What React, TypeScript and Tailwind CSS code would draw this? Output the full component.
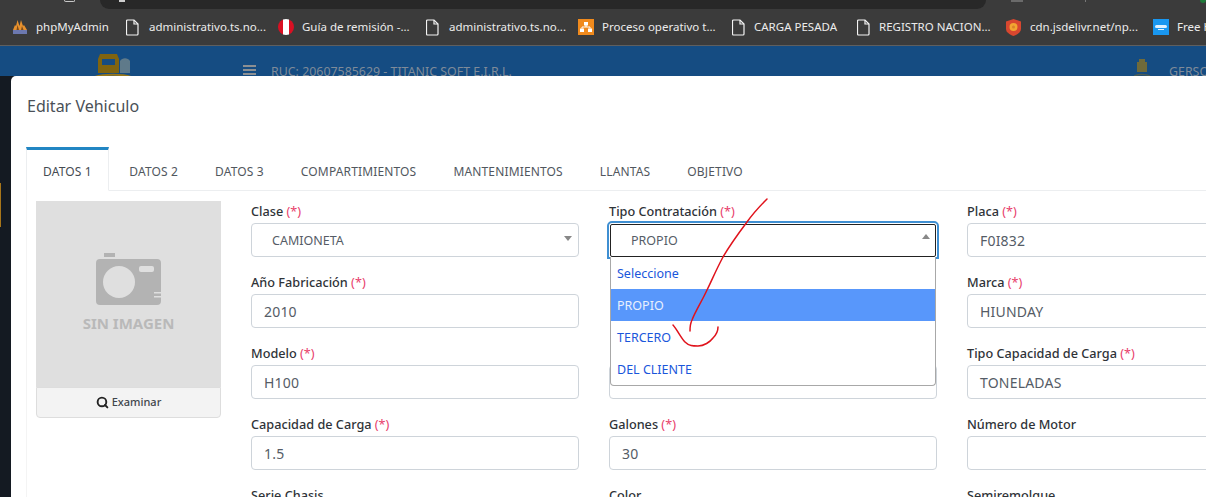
import React from "react";
import { Search } from "lucide-react";

const PageIcon = () => (
  <svg width="13" height="17" viewBox="0 0 13 17" fill="none" stroke="#f4f4f4" strokeWidth="1.2" className="-mr-px">
    <path d="M1.500 1h6.500l4 4v10a1 1 0 0 1-1 1h-9.500a1 1 0 0 1-1-1V2a1 1 0 0 1 1-1z" />
    <path d="M8 1v4h4" />
  </svg>
);

const PmaIcon = () => (
  <svg width="16" height="16" viewBox="0 0 16 16">
    <path d="M1 11 3 6l1 1 1.500-6 2 6L9 1l2 6 1-1 3 5z" fill="#e8912d" />
    <path d="M4.500 11 5.500 6l1.500 5zM9 11l1-4 1.500 4z" fill="#7a4a1a" />
    <rect x="1" y="11" width="14" height="4" fill="#6c78af" />
  </svg>
);

const PeruIcon = () => (
  <div className="flex w-4 h-4 rounded-full overflow-hidden">
    <div className="flex-1 bg-[#d91023]" />
    <div className="flex-1 bg-white" />
    <div className="flex-1 bg-[#d91023]" />
  </div>
);

const OrangeIcon = () => (
  <svg width="16" height="16" viewBox="0 0 16 16" stroke="#fff" fill="#fff">
    <rect width="16" height="16" fill="#f08a1d" stroke="none" />
    <rect x="6" y="3" width="4" height="3.500" stroke="none" />
    <rect x="2" y="9.500" width="4" height="3.500" stroke="none" />
    <rect x="10" y="9.500" width="4" height="3.500" stroke="none" />
    <path d="M8 6v2M4 9.500V8h8v1.500" fill="none" />
  </svg>
);

const ShieldIcon = () => (
  <svg width="15" height="17" viewBox="0 0 15 17">
    <path d="M7.500 0 15 2.500V10c0 3-3.500 5.500-7.500 7C3.500 15.500 0 13 0 10V2.500z" fill="#d8472f" />
    <circle cx="7.500" cy="8" r="4" fill="#f2a531" />
    <circle cx="7.500" cy="8" r="1.500" fill="#d9822b" />
  </svg>
);

const CloudIcon = () => (
  <svg width="16" height="16" viewBox="0 0 16 16">
    <rect width="16" height="16" fill="#1997f0" />
    <rect x="2" y="6" width="12" height="3" rx="1.500" fill="#dff1ff" />
    <rect x="5" y="10" width="6" height="1" fill="#dff1ff" />
  </svg>
);

const bookmarks: { icon: React.ReactNode; label: string; width: string; box: string }[] = [
  { icon: <PmaIcon />, label: "phpMyAdmin", width: "w-[114px]", box: "w-4" },
  { icon: <PageIcon />, label: "administrativo.ts.no...", width: "w-[152px]", box: "w-[15px]" },
  { icon: <PeruIcon />, label: "Guía de remisión -...", width: "w-[148px]", box: "w-4" },
  { icon: <PageIcon />, label: "administrativo.ts.no...", width: "w-[152px]", box: "w-[15px]" },
  { icon: <OrangeIcon />, label: "Proceso operativo t...", width: "w-[154px]", box: "w-4" },
  { icon: <PageIcon />, label: "CARGA PESADA", width: "w-[125px]", box: "w-[14px]" },
  { icon: <PageIcon />, label: "REGISTRO NACION...", width: "w-[149px]", box: "w-[14px]" },
  { icon: <ShieldIcon />, label: "cdn.jsdelivr.net/np...", width: "w-[147px]", box: "w-4" },
  { icon: <CloudIcon />, label: "Free Hosting", width: "w-[100px]", box: "w-4" },
];

const tabs = ["DATOS 1", "DATOS 2", "DATOS 3", "COMPARTIMIENTOS", "MANTENIMIENTOS", "LLANTAS", "OBJETIVO"];

const Req = () => <span className="text-[#e83e6b] font-normal"> (*)</span>;

const Label = ({ text, req = true }: { text: string; req?: boolean }) => (
  <label className="block h-[22px] text-[12.7px] leading-[20px] font-medium text-[#2f3338] whitespace-nowrap">
    {text}
    {req && <Req />}
  </label>
);

const Field = ({ label, req = true, value, select }: { label: string; req?: boolean; value?: string; select?: boolean }) => (
  <div className="flex flex-col h-[71px]">
    <Label text={label} req={req} />
    <div className={`h-[34px] shrink-0 border border-[#ced4da] rounded-[4px] bg-white flex items-center text-[#555c66] ${select ? "pl-[20px] pt-[2px] text-[12.5px]" : "pl-3 pt-px text-sm tracking-[0.2px]"}`}>
      {value}
      {select && <div className="ml-auto mr-[6px] -mt-[5px] w-0 h-0 border-x-[4px] border-x-transparent border-t-[5px] border-t-[#888]" />}
    </div>
  </div>
);

const DropOption = ({ text, active }: { text: string; active?: boolean }) => (
  <div className={`h-8 pl-[6px] pt-[2px] flex items-center text-[12.5px] ${active ? "bg-[#5897fb] text-[#e8f0fe]" : "text-[#1a56db]"}`}>{text}</div>
);

const TipoDropdown = () => (
  <div className="absolute -left-[2px] -right-[2px] top-[20px] z-10">
    <div className="h-[38px] rounded-t-[5px] border-2 border-[#3f8fd2] p-px bg-white">
      <div className="h-[33px] border border-[#222] rounded-[2px] bg-white flex items-center pl-[20px] pt-[2px] text-[12.5px] text-[#555c66]">
        PROPIO
        <div className="ml-auto mr-[5px] -mt-[10px] w-0 h-0 border-x-[4px] border-x-transparent border-b-[5px] border-b-[#888]" />
      </div>
    </div>
    <div className="mx-[3px] -mt-[2px] relative bg-white border border-[#a8a8a8] border-t-0 rounded-b-[4px] overflow-hidden">
      <DropOption text="Seleccione" />
      <DropOption text="PROPIO" active />
      <DropOption text="TERCERO" />
      <DropOption text="DEL CLIENTE" />
    </div>
  </div>
);

const Logo = () => (
  <svg width="40" height="24" viewBox="0 0 40 24" fill="none" className="ml-[94px] mt-[7px] shrink-0">
    <path d="M26 20V8a6 6 0 0 1 10 0v12z" fill="#5f7a8a" />
    <path d="M6 1h17l2 5v14H4V6z" fill="#80640f" />
    <rect x="8" y="6" width="13" height="6" fill="#154c82" />
    <path d="M1 24c8-3 28-3 36 0" stroke="#96761a" strokeWidth="2" />
  </svg>
);

export default function App() {
  return (
    <div className="relative w-[1206px] h-[497px] overflow-hidden bg-[#141a22] font-['Noto_Sans','Open_Sans',sans-serif]">
      <div className="h-[10px] bg-[#3b3b3b] relative overflow-hidden">
        <div className="ml-[100px] w-[886px] h-[9px] bg-[#282828] rounded-b-[10px]" />
        <div className="absolute left-[64px] top-0 w-[11px] h-[2px] rounded-b-full border-b border-x border-[#c8c8c8]" />
        <div className="absolute left-[119px] top-0 w-[6px] h-[2px] bg-[#cfcfcf]" />
        <div className="absolute left-[1011px] top-0 w-[12px] h-[2px] bg-[#6a6a6a]" />
        <div className="absolute left-[1085px] top-0 w-px h-[2px] bg-[#777]" />
        <div className="absolute left-[1200px] top-0 w-[6px] h-[3px] rounded-b-full bg-[#1f7a3a]" />
      </div>
      <div className="h-[36px] bg-[#3b3b3b] border-b border-[#5f5f5f] flex items-center pl-[12px] pb-px overflow-hidden">
        {bookmarks.map((b, i) => (
          <div key={i} className={`flex items-center gap-[8px] shrink-0 text-[11.5px] text-[#ececec] whitespace-nowrap ${b.width}`}>
            <div className={`h-[17px] flex items-center ${b.box}`}>{b.icon}</div>
            <span>{b.label}</span>
          </div>
        ))}
      </div>
      <div className="h-[30px] bg-[#154c82] flex items-start text-[12.4px] leading-[18px] text-[#7f8b99] overflow-hidden">
        <Logo />
        <div className="ml-[109px] mt-[19px] w-[13px] flex flex-col gap-[2px] shrink-0">
          <div className="h-[2px] bg-[#8c8f92]" />
          <div className="h-[2px] bg-[#8c8f92]" />
          <div className="h-[2px] bg-[#8c8f92]" />
        </div>
        <span className="ml-[15px] mt-[17px] whitespace-nowrap">RUC: 20607585629 - TITANIC SOFT E.I.R.L.</span>
        <svg width="18" height="18" viewBox="0 0 18 18" fill="none" className="ml-auto mt-[13px] shrink-0">
          <rect x="5" y="0" width="6" height="3" fill="#6f6a3a" />
          <rect x="3" y="3" width="10" height="10" fill="#6f6a3a" />
          <path d="M0 17c4-2 12-2 16 0" stroke="#4d5d55" strokeWidth="1.500" />
        </svg>
        <span className="ml-[17px] mt-[17px] w-[37px] shrink-0 overflow-hidden">GERSON</span>
      </div>

      <div className="absolute left-[11px] top-[76px] w-[1220px] h-[440px] bg-white rounded-[5px]">
        <div className="h-[62px] pl-[16px] pt-[19px] text-[16px] leading-[22px] text-[#4a5057]">Editar Vehiculo</div>
        <div className="mt-[9px] ml-[15px] h-[44px] flex border-b border-[#eceef0] text-[12px] text-[#51575e]">
          {tabs.map((t, i) => (
            <div key={t} className={`h-[44px] flex items-center whitespace-nowrap tracking-[0.15px] ${i === 0 ? "px-[16px] mr-[4.500px] pt-[3px] bg-white border-t-[3px] border-t-[#2286c3] border-x border-x-[#eceef0] border-b border-b-white text-[#454b52]" : "px-[16px] mr-[5px] pt-[5px]"}`}>
              {t}
            </div>
          ))}
        </div>
        <div className="ml-[15px] pl-[9px] pt-[10px] border-l border-[#f4f4f4] flex">
          <div className="w-[185px] shrink-0">
            <div className="h-[186px] bg-[#dfdfdf] flex flex-col items-center pt-[52px]">
              <svg width="65" height="52" viewBox="0 0 65 52" fill="#b3b3b3">
                <path d="M8 0h11v4H8zM4 6h57a4 4 0 0 1 4 4v38a4 4 0 0 1-4 4H4a4 4 0 0 1-4-4V10a4 4 0 0 1 4-4z" />
                <circle cx="23" cy="29" r="16" fill="#dfdfdf" />
                <rect x="43" y="13" width="15" height="6" rx="2" fill="#dfdfdf" />
                <rect x="58" y="39" width="7" height="1.500" fill="#dfdfdf" />
                <rect x="58" y="43" width="7" height="1.500" fill="#dfdfdf" />
              </svg>
              <span className="mt-[9px] text-[15px] leading-[18px] font-bold text-[#b9b9b9]">SIN IMAGEN</span>
            </div>
            <div className="h-[31px] bg-[#f3f3f3] border border-[#dddddd] rounded-b-[4px] flex items-center justify-center gap-[3px] text-[11px] font-medium text-[#3f454b]">
              <Search size={13} strokeWidth={3.500} className="text-[#222]" />
              Examinar
            </div>
          </div>
          <div className="ml-[30px] grid grid-cols-[328px_328px_328px] gap-x-[30px] w-[1044px] shrink-0">
            <Field label="Clase" value="CAMIONETA" select />
            <div className="relative">
              <Label text="Tipo Contratación" />
              <TipoDropdown />
            </div>
            <Field label="Placa" value="F0I832" />
            <Field label="Año Fabricación" value="2010" />
            <div />
            <Field label="Marca" value="HIUNDAY" />
            <Field label="Modelo" value="H100" />
            <div className="pt-[22px]"><div className="h-[34px] border border-[#ced4da] rounded-[4px]" /></div>
            <Field label="Tipo Capacidad de Carga" value="TONELADAS" />
            <Field label="Capacidad de Carga" value="1.5" />
            <Field label="Galones" value="30" />
            <Field label="Número de Motor" req={false} />
            <Field label="Serie Chasis" req={false} />
            <Field label="Color" req={false} />
            <Field label="Semiremolque" req={false} />
          </div>
        </div>
      </div>

      <div className="absolute left-0 top-[183px] w-px h-[44px] bg-[#a8761a]" />

      <svg className="absolute left-0 top-0 pointer-events-none z-20" width="1206" height="497" fill="none" stroke="#e0131c" strokeWidth="1.500" strokeLinecap="round" strokeLinejoin="round">
        <path d="M767 199C760 206 752 215 747 222 738 234 730 245 723 257 716 270 712 280 707 290 702 301 696 310 692 320 690 324 690 328 690 331" />
        <path d="M673 325C678 331 681 338 685 342 689 346 693 346 698 346 704 346 710 342 713 338 716 335 718 331 718 327" />
      </svg>
    </div>
  );
}
